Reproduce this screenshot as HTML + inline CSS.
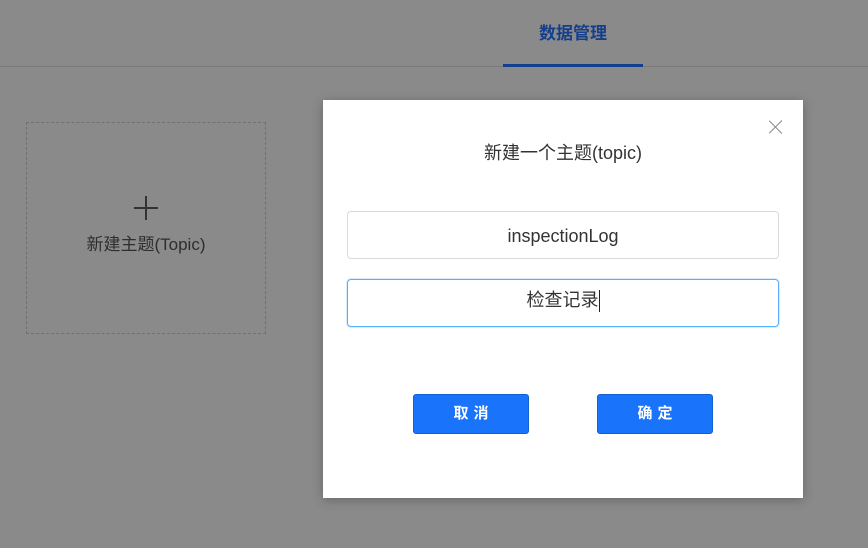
<!DOCTYPE html>
<html><head><meta charset="utf-8"><style>
*{box-sizing:border-box;margin:0;padding:0}
body{width:868px;height:548px;background:#8a8a8a;position:relative;overflow:hidden;font-family:"Liberation Sans","Noto Sans CJK SC",sans-serif}
.hdr{position:absolute;left:0;top:0;width:868px;height:67px;border-bottom:1px solid #7a7a7a}
.tab{position:absolute;left:503px;top:0;width:140px;height:67px;text-align:center;line-height:68px;color:#153f8a;font-size:17px;font-weight:bold;border-bottom:3px solid #133f8f}
.card{position:absolute;left:26px;top:122px;width:240px;height:212px;border:1px dashed #707070}
.plus{position:absolute;left:107px;top:73px;width:24px;height:24px}
.plus:before{content:"";position:absolute;left:11px;top:0;width:2px;height:24px;background:#333}
.plus:after{content:"";position:absolute;left:0;top:11px;width:24px;height:2px;background:#333}
.card .t{position:absolute;left:0;right:0;top:107px;text-align:center;font-size:17px;color:#2e2e2e}
.modal{position:absolute;left:323px;top:100px;width:480px;height:398px;background:#fff;box-shadow:0 2px 10px rgba(0,0,0,.25)}
.x{position:absolute;left:446px;top:20px;width:14px;height:14px}
.x:before,.x:after{content:"";position:absolute;left:6px;top:-2px;width:1.4px;height:18px;background:#888;transform:rotate(45deg)}
.x:after{transform:rotate(-45deg)}
.title{position:absolute;left:0;right:0;top:39px;text-align:center;font-size:18px;color:#333}
.inp{position:absolute;left:24px;width:432px;height:48px;border:1px solid #d9d9d9;border-radius:4px;text-align:center;line-height:48px;font-size:18px;color:#333}
.btn{position:absolute;top:294px;width:116px;height:40px;background:#1a73fb;border:1px solid #1560d0;border-radius:3px;color:#fff;font-size:15px;font-weight:bold;text-align:center;line-height:38px;letter-spacing:5px;padding-left:5px}
</style></head><body>
<div class="hdr"><div class="tab">数据管理</div></div>
<div class="card"><div class="plus"></div><div class="t">新建主题(Topic)</div></div>
<div class="modal">
<div class="x"></div>
<div class="title">新建一个主题(topic)</div>
<div class="inp" style="top:111px">inspectionLog</div>
<div class="inp" style="top:179px;border-color:#5aaefc;box-shadow:0 0 0 1px #d6ebff;line-height:40px">检查记录<span style="display:inline-block;width:1px;height:22px;background:#222;vertical-align:middle"></span></div>
<div class="btn" style="left:90px">取消</div>
<div class="btn" style="left:274px">确定</div>
</div>
</body></html>
